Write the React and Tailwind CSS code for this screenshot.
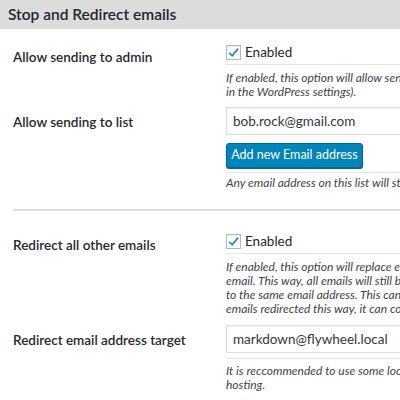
export default function App() {
  const font = { fontFamily: 'Lato, "Noto Sans", sans-serif' };
  const Check = () => (
    <span className="inline-flex h-[15px] w-[15px] shrink-0 items-center justify-center border border-[#b4b9be] bg-white shadow-[inset_0_1px_2px_rgba(0,0,0,0.1)]">
      <svg width="13" height="13" viewBox="0 0 20 20">
        <path d="M3.5 10.5 L8 15 L17 4" fill="none" stroke="#1e8cbe" strokeWidth="2.6" />
      </svg>
    </span>
  );
  const desc = "whitespace-nowrap text-[12px] italic leading-[14px] text-[#3c434a]";
  const label = "text-[13.5px] font-semibold leading-[18px] text-[#23282d]";
  return (
    <div className="h-[400px] w-[400px] overflow-hidden bg-white text-[#23282d]" style={font}>
      <div className="flex h-[29px] items-center bg-[#dcdcdc] pl-2 text-[15.5px] font-semibold text-[#23282d]">
        Stop and Redirect emails
      </div>
      <div className="grid grid-cols-[213px_600px] pl-[13px]">
        {/* row 1 */}
        <div className={`pt-[19px] ${label}`}>Allow sending to admin</div>
        <div className="pt-[16px]">
          <div className="flex h-[15px] items-center gap-[4px] text-[13.5px]">
            <Check />
            <span>Enabled</span>
          </div>
          <div className="mt-[4px] h-px bg-[#e5e5e5]" />
          <div className={`mt-[6px] ${desc}`}>
            <div>If enabled, this option will allow sending emails to the admin email address (set</div>
            <div>in the WordPress settings).</div>
          </div>
        </div>
        {/* row 2 */}
        <div className={`pt-[14px] ${label}`}>Allow sending to list</div>
        <div className="pt-[8px]">
          <div className="flex h-[28px] items-center border border-[#ddd] pl-[6px] text-[13.5px] text-[#32373c] shadow-[inset_0_1px_2px_rgba(0,0,0,0.07)]">
            bob.rock@gmail.com
          </div>
          <div className="mt-[8px] flex h-[25px] w-[137px] items-center justify-center whitespace-nowrap rounded-[3px] border border-[#006799] bg-[#0085ba] text-[12.5px] text-white shadow-[0_1px_0_#006799]">
            Add new Email address
          </div>
          <div className="mt-[4px] h-px bg-[#e5e5e5]" />
          <div className={`mt-[3px] ${desc}`}>
            Any email address on this list will still receive emails sent by this site.
          </div>
        </div>
        {/* separator */}
        <div className="col-span-2 mt-[19px] h-[2px] bg-[#e1e1e1]" />
        {/* row 3 */}
        <div className={`pt-[25px] ${label}`}>Redirect all other emails</div>
        <div className="pt-[23px]">
          <div className="flex h-[15px] items-center gap-[4px] text-[13.5px]">
            <Check />
            <span>Enabled</span>
          </div>
          <div className="mt-[4px] h-px bg-[#e5e5e5]" />
          <div className={`mt-[6px] ${desc}`}>
            <div>If enabled, this option will replace each recipient with the target</div>
            <div>email. This way, all emails will still be sent, but they will all go</div>
            <div>to the same email address. This can be useful for testing, for all</div>
            <div>emails redirected this way, it can contain original recipients.</div>
          </div>
        </div>
        {/* row 4 */}
        <div className={`pt-[15px] ${label}`}>Redirect email address target</div>
        <div className="pt-[9px]">
          <div className="flex h-[28px] items-center border border-[#ddd] pl-[6px] text-[13.5px] text-[#32373c] shadow-[inset_0_1px_2px_rgba(0,0,0,0.07)]">
            markdown@flywheel.local
          </div>
          <div className="mt-[5px] h-px bg-[#e5e5e5]" />
          <div className={`mt-[5px] ${desc}`}>
            <div>It is reccommended to use some local email address on your</div>
            <div>hosting.</div>
          </div>
        </div>
      </div>
    </div>
  );
}
